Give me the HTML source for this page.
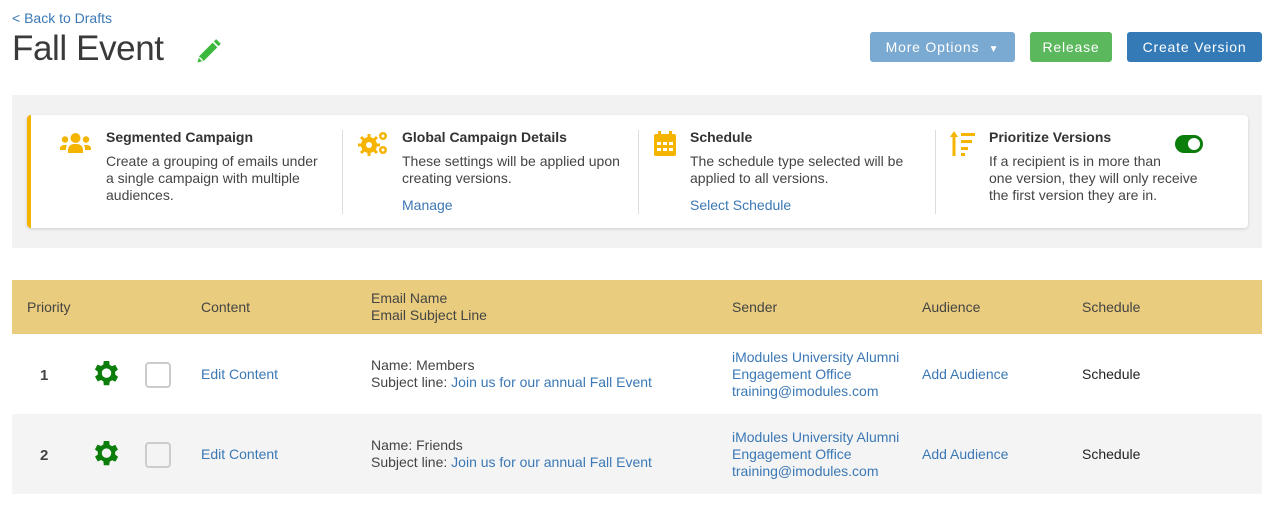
<!DOCTYPE html>
<html><head><meta charset="utf-8"><style>
body{margin:0;width:1268px;height:505px;background:#fff;font-family:"Liberation Sans",sans-serif;color:#444;font-size:14px;position:relative;overflow:hidden}
.a{position:absolute}
a,.lk{color:#3b78b5;text-decoration:none}
.btn{position:absolute;top:32px;height:30px;line-height:30px;color:#fff;font-size:14px;letter-spacing:.8px;text-align:center;border-radius:3px}
.t{font-weight:bold;color:#333;font-size:14px}
.d{line-height:17px}
.div{position:absolute;top:130px;width:1px;height:84px;background:#ddd}
.cell{position:absolute;line-height:17px}
</style></head><body>
<div class="a lk" style="left:12px;top:10px;font-size:14px">&lt; Back to Drafts</div>
<div class="a" style="left:12px;top:29px;font-size:35px;letter-spacing:-0.4px;color:#3a3a3a">Fall Event</div>
<svg class="a" style="left:194px;top:38px" width="28" height="28" viewBox="0 0 24 24"><path d="M3 21l1.5-5.5L16 4l4 4L8.5 19.5z" fill="#3cb93c"/><path d="M17 3l2-2 4 4-2 2z" fill="#3cb93c"/><path d="M4.5 16.5l3 3" stroke="#fff" stroke-width="1.2"/></svg>
<div class="btn" style="left:870px;width:145px;background:#7aa9d2">More Options &nbsp;<span style="font-size:10px">▼</span></div>
<div class="btn" style="left:1030px;width:82px;background:#5cb85c">Release</div>
<div class="btn" style="left:1127px;width:135px;background:#337ab7">Create Version</div>

<div class="a" style="left:12px;top:95px;width:1250px;height:153px;background:#f2f2f2"></div>
<div class="a" style="left:27px;top:115px;width:1217px;height:113px;background:#fff;border-left:4px solid #f5b400;border-radius:4px;box-shadow:0 1px 3px rgba(0,0,0,.15)"></div>
<div class="div" style="left:342px"></div><div class="div" style="left:638px"></div><div class="div" style="left:935px"></div>

<svg class="a" style="left:60px;top:132px" width="31" height="22" viewBox="0 0 31 22"><circle cx="15.5" cy="6" r="5" fill="#f5b400"/><circle cx="5" cy="7.5" r="3.2" fill="#f5b400"/><circle cx="26" cy="7.5" r="3.2" fill="#f5b400"/><path d="M8 21v-3a6 6 0 0 1 6-6h3a6 6 0 0 1 6 6v3z" fill="#f5b400"/><path d="M0 18a4 4 0 0 1 4-5h3a7 7 0 0 0-1 4v1z M31 18a4 4 0 0 0-4-5h-3a7 7 0 0 1 1 4v1z" fill="#f5b400"/></svg>
<div class="a t" style="left:106px;top:129px">Segmented Campaign</div>
<div class="a d" style="left:106px;top:153px">Create a grouping of emails under<br>a single campaign with multiple<br>audiences.</div>

<svg class="a" style="left:357px;top:130px" width="32" height="26" viewBox="0 0 32 26"><g fill="#f5b400"><circle cx="12" cy="15" r="8"/><circle cx="26" cy="6" r="4"/><circle cx="26" cy="20" r="4"/></g><g fill="#fff"><circle cx="12" cy="15" r="3"/><circle cx="26" cy="6" r="1.5"/><circle cx="26" cy="20" r="1.5"/></g><g stroke="#f5b400" stroke-width="3"><path d="M12 4v22M1 15h22M4 7l16 16M20 7L4 23"/></g><circle cx="12" cy="15" r="3" fill="#fff"/></svg>
<div class="a t" style="left:402px;top:129px">Global Campaign Details</div>
<div class="a d" style="left:402px;top:153px">These settings will be applied upon<br>creating versions.</div>
<div class="a lk" style="left:402px;top:197px">Manage</div>

<svg class="a" style="left:654px;top:131px" width="22" height="25" viewBox="0 0 22 25"><rect x="0" y="3" width="22" height="22" rx="2" fill="#f5b400"/><rect x="4" y="0" width="3" height="5" fill="#f5b400"/><rect x="15" y="0" width="3" height="5" fill="#f5b400"/><g fill="#fff"><rect x="3" y="11" width="4" height="3"/><rect x="9" y="11" width="4" height="3"/><rect x="15" y="11" width="4" height="3"/><rect x="3" y="17" width="4" height="3"/><rect x="9" y="17" width="4" height="3"/><rect x="15" y="17" width="4" height="3"/></g></svg>
<div class="a t" style="left:690px;top:129px">Schedule</div>
<div class="a d" style="left:690px;top:153px">The schedule type selected will be<br>applied to all versions.</div>
<div class="a lk" style="left:690px;top:197px">Select Schedule</div>

<svg class="a" style="left:950px;top:131px" width="26" height="25" viewBox="0 0 26 25"><g fill="#f5b400"><path d="M4 0l4 6H5.5v19h-3V6H0z"/><rect x="11" y="2" width="14" height="3"/><rect x="11" y="9" width="11" height="3"/><rect x="11" y="16" width="7" height="3"/><rect x="11" y="22" width="4" height="3"/></g></svg>
<div class="a t" style="left:989px;top:129px">Prioritize Versions</div>
<div class="a d" style="left:989px;top:153px">If a recipient is in more than<br>one version, they will only receive<br>the first version they are in.</div>
<div class="a" style="left:1175px;top:135px;width:28px;height:18px;border-radius:9px;background:#0b7d0b"></div>
<div class="a" style="left:1188px;top:138px;width:12px;height:12px;border-radius:6px;background:#fff"></div>

<div class="a" style="left:12px;top:280px;width:1250px;height:54px;background:#e9cc7d"></div>
<div class="cell" style="left:27px;top:299px">Priority</div>
<div class="cell" style="left:201px;top:299px">Content</div>
<div class="cell" style="left:371px;top:290px">Email Name<br>Email Subject Line</div>
<div class="cell" style="left:732px;top:299px">Sender</div>
<div class="cell" style="left:922px;top:299px">Audience</div>
<div class="cell" style="left:1082px;top:299px">Schedule</div>

<div class="a" style="left:12px;top:414px;width:1250px;height:80px;background:#f4f4f4"></div>

<div class="cell" style="left:40px;top:367px;font-weight:bold;font-size:15px">1</div>
<svg class="a" style="left:93px;top:361px" width="27" height="27" viewBox="3 3 20 20"><path fill="#0b7d0b" d="M19.4 13a7.5 7.5 0 0 0 0-2l2.1-1.6-2-3.5-2.5 1a7.3 7.3 0 0 0-1.7-1L15 3h-4l-.4 2.7a7.3 7.3 0 0 0-1.7 1l-2.5-1-2 3.5L6.6 11a7.5 7.5 0 0 0 0 2l-2.1 1.6 2 3.5 2.5-1a7.3 7.3 0 0 0 1.7 1L11 21h4l.4-2.7a7.3 7.3 0 0 0 1.7-1l2.5 1 2-3.5zM13 15.5a3.5 3.5 0 1 1 0-7 3.5 3.5 0 0 1 0 7z"/></svg>
<div class="a" style="left:145px;top:362px;width:22px;height:22px;border:2px solid #ccc;border-radius:4px;background:#fff"></div>
<div class="cell lk" style="left:201px;top:366px">Edit Content</div>
<div class="cell" style="left:371px;top:357px">Name: Members<br>Subject line: <span class="lk">Join us for our annual Fall Event</span></div>
<div class="cell lk" style="left:732px;top:349px">iModules University Alumni<br>Engagement Office<br>training@imodules.com</div>
<div class="cell lk" style="left:922px;top:366px">Add Audience</div>
<div class="cell" style="left:1082px;top:366px;color:#222">Schedule</div>

<div class="cell" style="left:40px;top:447px;font-weight:bold;font-size:15px">2</div>
<svg class="a" style="left:93px;top:441px" width="27" height="27" viewBox="3 3 20 20"><path fill="#0b7d0b" d="M19.4 13a7.5 7.5 0 0 0 0-2l2.1-1.6-2-3.5-2.5 1a7.3 7.3 0 0 0-1.7-1L15 3h-4l-.4 2.7a7.3 7.3 0 0 0-1.7 1l-2.5-1-2 3.5L6.6 11a7.5 7.5 0 0 0 0 2l-2.1 1.6 2 3.5 2.5-1a7.3 7.3 0 0 0 1.7 1L11 21h4l.4-2.7a7.3 7.3 0 0 0 1.7-1l2.5 1 2-3.5zM13 15.5a3.5 3.5 0 1 1 0-7 3.5 3.5 0 0 1 0 7z"/></svg>
<div class="a" style="left:145px;top:442px;width:22px;height:22px;border:2px solid #ccc;border-radius:4px;background:#f4f4f4"></div>
<div class="cell lk" style="left:201px;top:446px">Edit Content</div>
<div class="cell" style="left:371px;top:437px">Name: Friends<br>Subject line: <span class="lk">Join us for our annual Fall Event</span></div>
<div class="cell lk" style="left:732px;top:429px">iModules University Alumni<br>Engagement Office<br>training@imodules.com</div>
<div class="cell lk" style="left:922px;top:446px">Add Audience</div>
<div class="cell" style="left:1082px;top:446px;color:#222">Schedule</div>
</body></html>
